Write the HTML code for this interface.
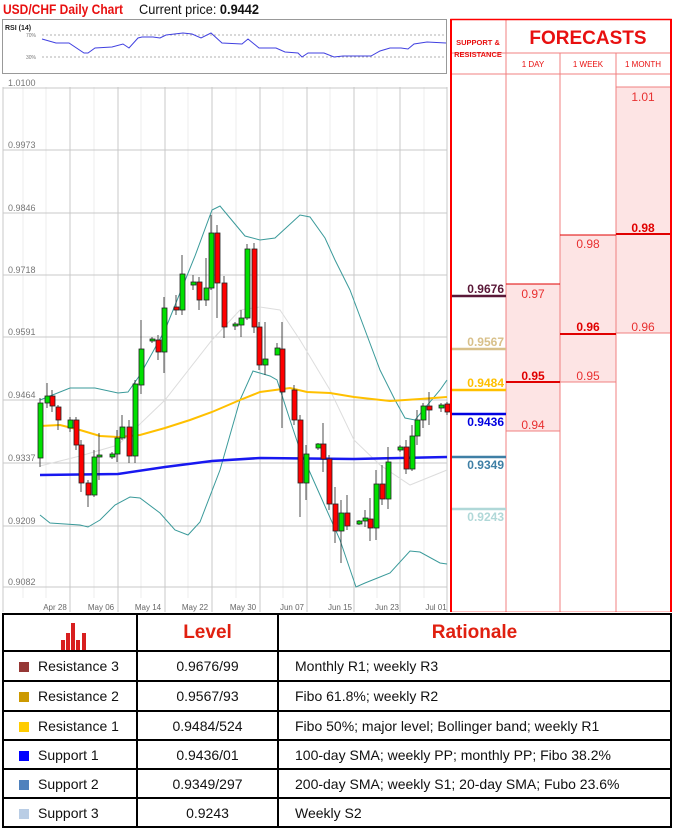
<!DOCTYPE html>
<html><head><meta charset="utf-8"><style>
body{margin:0;width:673px;height:830px;background:#fff;position:relative;overflow:hidden;font-family:"Liberation Sans",sans-serif}
table{position:absolute;left:2px;top:613px;border-collapse:collapse;width:670px}
td{border:2px solid #000;font-size:14px;color:#111;padding:0}
.sq{display:inline-block;width:10px;height:10px;margin:0 9px 0 15px;vertical-align:-1px}
</style></head><body>
<svg width="673" height="612" style="position:absolute;left:0;top:0" font-family="Liberation Sans, sans-serif">
<text x="3" y="14" font-size="14" font-weight="bold" fill="#e81010" textLength="120" lengthAdjust="spacingAndGlyphs">USD/CHF Daily Chart</text>
<text x="139" y="14" font-size="14" fill="#111" textLength="120" lengthAdjust="spacingAndGlyphs">Current price: <tspan font-weight="bold">0.9442</tspan></text>
<rect x="2.5" y="19.5" width="444" height="54" fill="#fff" stroke="#999"/>
<text x="5" y="30" font-size="7" font-weight="bold" fill="#222">RSI (14)</text>
<text x="26" y="37" font-size="5" fill="#777">70%</text><text x="26" y="59" font-size="5" fill="#777">30%</text>
<line x1="42" y1="35" x2="446" y2="35" stroke="#999" stroke-dasharray="2,2" stroke-width="0.7"/>
<line x1="42" y1="57" x2="446" y2="57" stroke="#999" stroke-dasharray="2,2" stroke-width="0.7"/>
<polyline fill="none" stroke="#4040e0" stroke-width="1" points="42,39 56,43 69,43 84,53 88,53 95,48 112,47 123,44 129,48 138,38 142,37 153,37 160,38 166,35 183,33 192,34 201,38 211,33 222,43 242,44 248,39 259,48 276,48 285,52 298,53 302,57 308,53 324,53 334,57 343,56 371,56 380,51 390,48 401,48 408,49 414,44 427,42 446,43"/>
<g stroke="#eee" stroke-width="1">
<line x1="23" y1="87" x2="23" y2="598"/><line x1="46" y1="87" x2="46" y2="598"/><line x1="94" y1="87" x2="94" y2="598"/><line x1="141" y1="87" x2="141" y2="598"/><line x1="188" y1="87" x2="188" y2="598"/><line x1="236" y1="87" x2="236" y2="598"/><line x1="283" y1="87" x2="283" y2="598"/><line x1="330" y1="87" x2="330" y2="598"/><line x1="377" y1="87" x2="377" y2="598"/><line x1="424" y1="87" x2="424" y2="598"/>
</g>
<g stroke="#c8c8c8" stroke-width="1">
<line x1="3" y1="87" x2="3" y2="612"/>
<line x1="70" y1="87" x2="70" y2="612"/><line x1="118" y1="87" x2="118" y2="612"/><line x1="165" y1="87" x2="165" y2="612"/><line x1="212" y1="87" x2="212" y2="612"/><line x1="260" y1="87" x2="260" y2="612"/><line x1="307" y1="87" x2="307" y2="612"/><line x1="354" y1="87" x2="354" y2="612"/><line x1="400" y1="87" x2="400" y2="612"/><line x1="447" y1="87" x2="447" y2="612"/>
<line x1="3" y1="88" x2="447" y2="88"/><line x1="3" y1="150" x2="447" y2="150"/><line x1="3" y1="213" x2="447" y2="213"/><line x1="3" y1="275" x2="447" y2="275"/><line x1="3" y1="337" x2="447" y2="337"/><line x1="3" y1="400" x2="447" y2="400"/><line x1="3" y1="463" x2="447" y2="463"/><line x1="3" y1="526" x2="447" y2="526"/><line x1="3" y1="587" x2="447" y2="587"/>
</g>
<g font-size="9" fill="#777">
<text x="8" y="86">1.0100</text><text x="8" y="148">0.9973</text><text x="8" y="211">0.9846</text><text x="8" y="273">0.9718</text><text x="8" y="335">0.9591</text><text x="8" y="398">0.9464</text><text x="8" y="461">0.9337</text><text x="8" y="524">0.9209</text><text x="8" y="585">0.9082</text>
</g>
<g font-size="8" fill="#666" text-anchor="middle">
<text x="55" y="610">Apr 28</text><text x="101" y="610">May 06</text><text x="148" y="610">May 14</text><text x="195" y="610">May 22</text><text x="243" y="610">May 30</text><text x="292" y="610">Jun 07</text><text x="340" y="610">Jun 15</text><text x="387" y="610">Jun 23</text><text x="436" y="610">Jul 01</text>
</g>
<g fill="none">
<polyline stroke="#ddd" stroke-width="1" points="40,466 80,456 118,445 165,400 212,340 240,310 260,307 280,310 300,340 330,390 354,440 380,465 410,485 447,470"/>
<polyline stroke="#3a9a9a" stroke-width="1" points="40,400 70,388 95,388 118,393 128,392 140,375 165,330 195,256 212,210 220,206 245,236 260,240 275,238 300,215 310,217 325,238 335,260 350,290 365,330 380,370 395,400 405,418 415,420 440,390 447,380"/>
<polyline stroke="#3a9a9a" stroke-width="1" points="40,515 50,523 80,525 88,527 100,520 115,505 130,497 140,498 160,513 175,530 188,535 200,522 220,470 240,400 253,371 270,376 277,380 290,420 300,450 320,495 340,540 356,587 365,583 390,573 410,551 420,552 440,563 447,564"/>
<polyline stroke="#ffc000" stroke-width="2" points="40,426 60,425 80,430 100,436 118,437 140,435 165,428 190,420 212,412 240,400 260,392 290,388 307,392 330,393 354,397 390,401 420,399 447,397"/>
<polyline stroke="#1818f0" stroke-width="2.5" points="40,475 118,474 165,467 212,461 260,458 354,459 400,458 447,457"/>
</g>
<g stroke="#222" stroke-width="0.8">
<line x1="40" y1="398" x2="40" y2="467"/><rect x="38" y="403" width="5" height="55" fill="#00e000"/>
<line x1="47" y1="383" x2="47" y2="408"/><rect x="45" y="396" width="5" height="7" fill="#00e000"/>
<line x1="52" y1="390" x2="52" y2="412"/><rect x="50" y="396" width="5" height="10" fill="#f00"/>
<line x1="58" y1="405" x2="58" y2="430"/><rect x="56" y="407" width="5" height="13" fill="#f00"/>
<line x1="70" y1="417" x2="70" y2="432"/><rect x="68" y="420" width="5" height="8" fill="#00e000"/>
<line x1="76" y1="417" x2="76" y2="450"/><rect x="74" y="420" width="5" height="25" fill="#f00"/>
<line x1="81" y1="440" x2="81" y2="492"/><rect x="79" y="445" width="5" height="38" fill="#f00"/>
<line x1="88" y1="480" x2="88" y2="507"/><rect x="86" y="483" width="5" height="12" fill="#f00"/>
<line x1="94" y1="450" x2="94" y2="497"/><rect x="92" y="457" width="5" height="38" fill="#00e000"/>
<line x1="99" y1="433" x2="99" y2="480"/><rect x="97" y="455" width="5" height="2" fill="#00e000"/>
<line x1="112" y1="452" x2="112" y2="459"/><rect x="110" y="454" width="5" height="3" fill="#00e000"/>
<line x1="117" y1="430" x2="117" y2="462"/><rect x="115" y="438" width="5" height="16" fill="#00e000"/>
<line x1="122" y1="415" x2="122" y2="440"/><rect x="120" y="427" width="5" height="11" fill="#00e000"/>
<line x1="129" y1="420" x2="129" y2="463"/><rect x="127" y="427" width="5" height="29" fill="#f00"/>
<line x1="135" y1="380" x2="135" y2="463"/><rect x="133" y="384" width="5" height="72" fill="#00e000"/>
<line x1="141" y1="320" x2="141" y2="394"/><rect x="139" y="349" width="5" height="36" fill="#00e000"/>
<line x1="152" y1="337" x2="152" y2="343"/><rect x="150" y="339" width="5" height="2" fill="#00e000"/>
<line x1="158" y1="335" x2="158" y2="360"/><rect x="156" y="340" width="5" height="12" fill="#f00"/>
<line x1="164" y1="297" x2="164" y2="373"/><rect x="162" y="308" width="5" height="44" fill="#00e000"/>
<line x1="176" y1="295" x2="176" y2="315"/><rect x="174" y="307" width="5" height="3" fill="#f00"/>
<line x1="182" y1="255" x2="182" y2="315"/><rect x="180" y="274" width="5" height="36" fill="#00e000"/>
<line x1="193" y1="275" x2="193" y2="290"/><rect x="191" y="282" width="5" height="3" fill="#00e000"/>
<line x1="199" y1="277" x2="199" y2="310"/><rect x="197" y="282" width="5" height="18" fill="#f00"/>
<line x1="206" y1="258" x2="206" y2="306"/><rect x="204" y="288" width="5" height="12" fill="#00e000"/>
<line x1="211" y1="215" x2="211" y2="290"/><rect x="209" y="233" width="5" height="55" fill="#00e000"/>
<line x1="217" y1="225" x2="217" y2="318"/><rect x="215" y="233" width="5" height="50" fill="#f00"/>
<line x1="224" y1="276" x2="224" y2="338"/><rect x="222" y="283" width="5" height="44" fill="#f00"/>
<line x1="235" y1="322" x2="235" y2="330"/><rect x="233" y="324" width="5" height="2" fill="#00e000"/>
<line x1="241" y1="310" x2="241" y2="337"/><rect x="239" y="318" width="5" height="7" fill="#00e000"/>
<line x1="247" y1="244" x2="247" y2="320"/><rect x="245" y="249" width="5" height="69" fill="#00e000"/>
<line x1="254" y1="243" x2="254" y2="333"/><rect x="252" y="249" width="5" height="78" fill="#f00"/>
<line x1="259" y1="322" x2="259" y2="370"/><rect x="257" y="327" width="5" height="38" fill="#f00"/>
<line x1="265" y1="322" x2="265" y2="375"/><rect x="263" y="359" width="5" height="6" fill="#00e000"/>
<line x1="277" y1="343" x2="277" y2="355"/><rect x="275" y="348" width="5" height="7" fill="#00e000"/>
<line x1="282" y1="322" x2="282" y2="428"/><rect x="280" y="349" width="5" height="43" fill="#f00"/>
<line x1="294" y1="385" x2="294" y2="425"/><rect x="292" y="390" width="5" height="30" fill="#f00"/>
<line x1="300" y1="415" x2="300" y2="517"/><rect x="298" y="420" width="5" height="63" fill="#f00"/>
<line x1="306" y1="445" x2="306" y2="500"/><rect x="304" y="454" width="5" height="29" fill="#00e000"/>
<line x1="318" y1="443" x2="318" y2="450"/><rect x="316" y="444" width="5" height="4" fill="#00e000"/>
<line x1="323" y1="423" x2="323" y2="472"/><rect x="321" y="444" width="5" height="15" fill="#f00"/>
<line x1="329" y1="455" x2="329" y2="510"/><rect x="327" y="459" width="5" height="45" fill="#f00"/>
<line x1="335" y1="487" x2="335" y2="543"/><rect x="333" y="504" width="5" height="27" fill="#f00"/>
<line x1="341" y1="500" x2="341" y2="563"/><rect x="339" y="513" width="5" height="18" fill="#00e000"/>
<line x1="347" y1="495" x2="347" y2="530"/><rect x="345" y="513" width="5" height="13" fill="#f00"/>
<line x1="359" y1="520" x2="359" y2="525"/><rect x="357" y="521" width="5" height="3" fill="#00e000"/>
<line x1="365" y1="510" x2="365" y2="527"/><rect x="363" y="518" width="5" height="3" fill="#00e000"/>
<line x1="370" y1="498" x2="370" y2="541"/><rect x="368" y="519" width="5" height="9" fill="#f00"/>
<line x1="376" y1="470" x2="376" y2="540"/><rect x="374" y="484" width="5" height="44" fill="#00e000"/>
<line x1="382" y1="465" x2="382" y2="505"/><rect x="380" y="484" width="5" height="15" fill="#f00"/>
<line x1="388" y1="447" x2="388" y2="509"/><rect x="386" y="462" width="5" height="37" fill="#00e000"/>
<line x1="400" y1="445" x2="400" y2="452"/><rect x="398" y="447" width="5" height="3" fill="#00e000"/>
<line x1="406" y1="440" x2="406" y2="474"/><rect x="404" y="447" width="5" height="22" fill="#f00"/>
<line x1="412" y1="425" x2="412" y2="471"/><rect x="410" y="436" width="5" height="33" fill="#00e000"/>
<line x1="417" y1="410" x2="417" y2="445"/><rect x="415" y="420" width="5" height="16" fill="#00e000"/>
<line x1="423" y1="403" x2="423" y2="428"/><rect x="421" y="406" width="5" height="14" fill="#00e000"/>
<line x1="429" y1="392" x2="429" y2="425"/><rect x="427" y="406" width="5" height="4" fill="#f00"/>
<line x1="441" y1="403" x2="441" y2="412"/><rect x="439" y="405" width="5" height="3" fill="#00e000"/>
<line x1="447" y1="402" x2="447" y2="415"/><rect x="445" y="404" width="5" height="8" fill="#f00"/>
</g>
<rect x="506" y="284" width="54" height="147" fill="#fde4e4"/>
<rect x="560" y="235" width="56" height="147" fill="#fde4e4"/>
<rect x="616" y="87" width="55" height="246" fill="#fde4e4"/>
<g stroke="#f08080" stroke-width="1">
<line x1="451" y1="53" x2="671" y2="53"/>
<line x1="506" y1="20" x2="506" y2="612"/>
<line x1="451" y1="74" x2="671" y2="74"/>
<line x1="560" y1="53" x2="560" y2="612"/>
<line x1="616" y1="53" x2="616" y2="612"/>
<line x1="616" y1="87" x2="671" y2="87"/>
<line x1="506" y1="431" x2="560" y2="431"/>
<line x1="560" y1="382" x2="616" y2="382"/>
<line x1="616" y1="333" x2="671" y2="333"/>
</g>
<g stroke="#e00000">
<line x1="506" y1="284" x2="560" y2="284" stroke-width="1"/>
<line x1="506" y1="382" x2="560" y2="382" stroke-width="2"/>
<line x1="560" y1="334" x2="616" y2="334" stroke-width="2"/>
<line x1="560" y1="235" x2="616" y2="235" stroke-width="1"/>
<line x1="616" y1="234" x2="671" y2="234" stroke-width="2"/>
</g>
<rect x="451" y="19.5" width="220" height="593" fill="none" stroke="#f00" stroke-width="1.5"/>
<line x1="451" y1="19" x2="451" y2="612" stroke="#f00" stroke-width="2"/>
<line x1="671" y1="19" x2="671" y2="612" stroke="#f00" stroke-width="2"/>
<g fill="#e81010" text-anchor="middle">
<text x="478" y="45" font-size="7.5" font-weight="bold">SUPPORT &amp;</text>
<text x="478" y="57" font-size="7.5" font-weight="bold">RESISTANCE</text>
<text x="588" y="44" font-size="19" font-weight="bold">FORECASTS</text>
</g>
<g fill="#e81010" text-anchor="middle" font-size="8">
<text x="533" y="67">1 DAY</text><text x="588" y="67">1 WEEK</text><text x="643" y="67">1 MONTH</text>
</g>
<g fill="#e83030" text-anchor="middle" font-size="12">
<text x="533" y="298">0.97</text><text x="533" y="380" font-weight="bold" fill="#e00000">0.95</text><text x="533" y="429">0.94</text>
<text x="588" y="248">0.98</text><text x="588" y="331" font-weight="bold" fill="#e00000">0.96</text><text x="588" y="380">0.95</text>
<text x="643" y="101">1.01</text><text x="643" y="232" font-weight="bold" fill="#e00000">0.98</text><text x="643" y="331">0.96</text>
</g>
<g stroke-width="2.5">
<line x1="452" y1="296" x2="506" y2="296" stroke="#5a1838"/>
<line x1="452" y1="349" x2="506" y2="349" stroke="#d8c08a"/>
<line x1="452" y1="390" x2="506" y2="390" stroke="#ffc000"/>
<line x1="452" y1="414" x2="506" y2="414" stroke="#0000e0"/>
<line x1="452" y1="457" x2="506" y2="457" stroke="#3f7fa5"/>
<line x1="452" y1="509" x2="506" y2="509" stroke="#b0d8d8"/>
</g>
<g font-size="12" font-weight="bold" text-anchor="end">
<text x="504" y="293" fill="#5a1838">0.9676</text>
<text x="504" y="346" fill="#d8c08a">0.9567</text>
<text x="504" y="387" fill="#ffc000">0.9484</text>
<text x="504" y="426" fill="#0000e0">0.9436</text>
<text x="504" y="469" fill="#3f7fa5">0.9349</text>
<text x="504" y="521" fill="#b0d8d8">0.9243</text>
</g>
</svg>
<table>
<tr style="height:37px"><td style="width:132px;position:relative"><svg width="30" height="30" style="position:absolute;left:56px;top:5px"><rect x="1" y="20" width="4" height="10" fill="#d82020"/><rect x="6" y="13" width="4" height="17" fill="#d82020"/><rect x="11" y="3" width="4" height="27" fill="#d82020"/><rect x="16" y="20" width="4" height="10" fill="#d82020"/><rect x="22" y="13" width="4" height="17" fill="#d82020"/></svg></td>
<td style="width:139px;text-align:center;font-size:19px;font-weight:bold;color:#e02010">Level</td>
<td style="text-align:center;font-size:19px;font-weight:bold;color:#e02010">Rationale</td></tr>
<tr style="height:30px"><td><span class="sq" style="background:#953735"></span>Resistance 3</td><td style="text-align:center">0.9676/99</td><td style="padding-left:16px">Monthly R1; weekly R3</td></tr>
<tr style="height:30px"><td><span class="sq" style="background:#cc9900"></span>Resistance 2</td><td style="text-align:center">0.9567/93</td><td style="padding-left:16px">Fibo 61.8%; weekly R2</td></tr>
<tr style="height:29px"><td><span class="sq" style="background:#ffcc00"></span>Resistance 1</td><td style="text-align:center">0.9484/524</td><td style="padding-left:16px">Fibo 50%; major level; Bollinger band; weekly R1</td></tr>
<tr style="height:29px"><td><span class="sq" style="background:#0000ff"></span>Support 1</td><td style="text-align:center">0.9436/01</td><td style="padding-left:16px">100-day SMA; weekly PP; monthly PP; Fibo 38.2%</td></tr>
<tr style="height:29px"><td><span class="sq" style="background:#4f81bd"></span>Support 2</td><td style="text-align:center">0.9349/297</td><td style="padding-left:16px">200-day SMA; weekly S1; 20-day SMA; Fubo 23.6%</td></tr>
<tr style="height:29px"><td><span class="sq" style="background:#b9cde5"></span>Support 3</td><td style="text-align:center">0.9243</td><td style="padding-left:16px">Weekly S2</td></tr>
</table>
</body></html>
